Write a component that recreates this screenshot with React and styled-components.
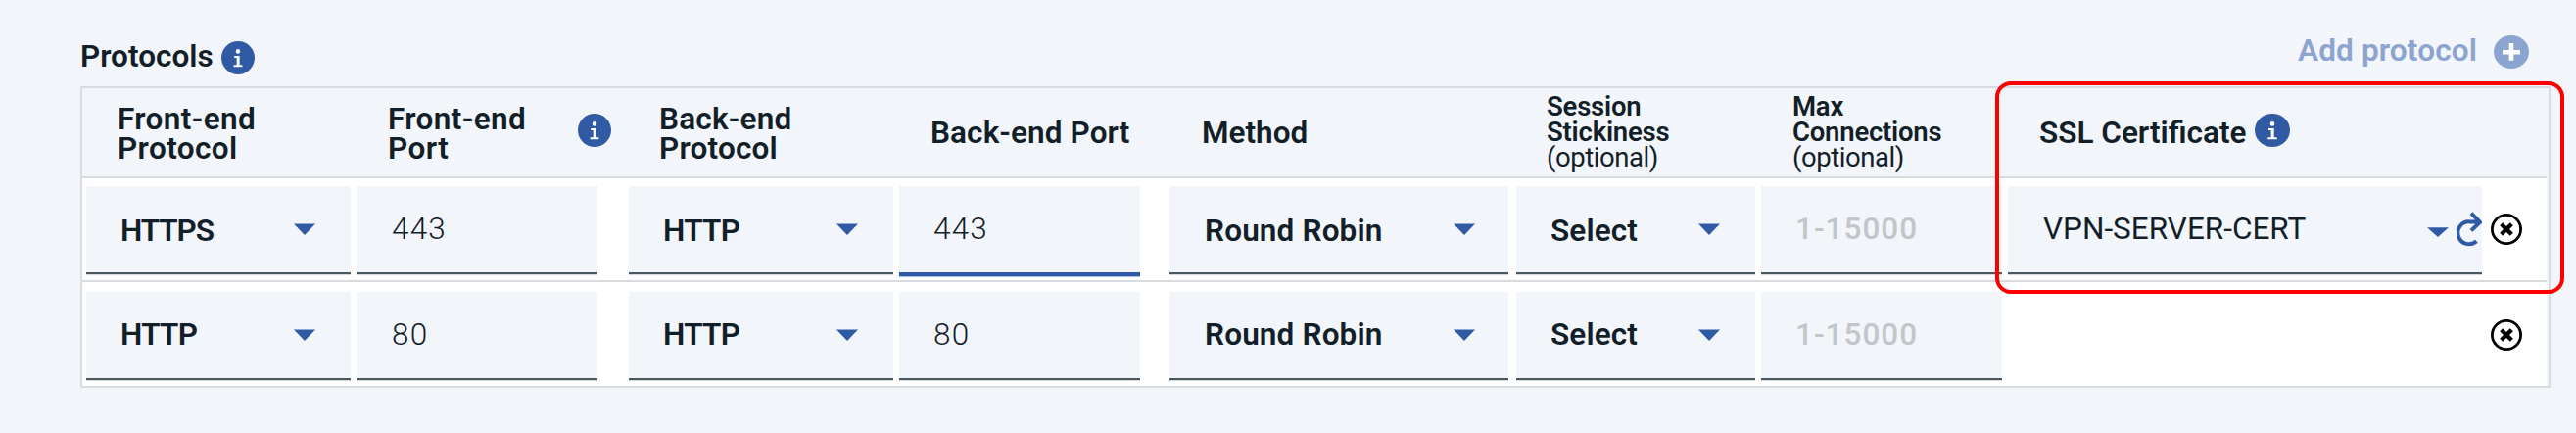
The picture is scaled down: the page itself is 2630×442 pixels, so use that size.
import React from "react";
import styled, { createGlobalStyle, css } from "styled-components";

const colors = {
  page: "#f2f5fa",
  ink: "#121e28",
  blue: "#305ba4",
  faded: "#8ba4d0",
  line: "#d8dbe0",
  underline: "#4a5861",
  hint: "#c2c6ca",
};

const GlobalStyle = createGlobalStyle`
  * { box-sizing: border-box; }
  body {
    margin: 0;
    background: ${colors.page};
    color: ${colors.ink};
    font-family: Roboto, "Liberation Sans", sans-serif;
  }
`;

const Page = styled.main`
  position: relative;
  width: 2630px;
  height: 442px;
  padding-left: 82px;
  overflow: hidden;
  background: ${colors.page};
`;

const Toolbar = styled.header`
  display: flex;
  justify-content: space-between;
  align-items: flex-start;
  width: 2500px;
  height: 88px;
`;

const Title = styled.h2`
  display: flex;
  margin: 0;
  padding-top: 42px;
  font-size: 31.5px;
  font-weight: 600;
  line-height: 31px;
`;

const TitleText = styled.span`
  width: 144px;
`;

const AddButton = styled.button`
  display: flex;
  margin: 0;
  padding: 36px 0 0;
  border: 0;
  background: none;
  color: ${colors.faded};
  font: 600 31.5px/31px Roboto, "Liberation Sans", sans-serif;
  letter-spacing: 0.15px;
`;

const AddText = styled.span`
  width: 200px;
  text-align: left;
`;

const Table = styled.section`
  width: 2522px;
  padding-right: 2px;
  border: 2px solid ${colors.line};
`;

const columns = css`
  display: grid;
  grid-template-columns: 276px 278px 276px 276px 354px 250px 252px 493px 1fr;
  padding-left: 4px;
`;

const HeaderRow = styled.div`
  ${columns}
  height: 92px;
  border-bottom: 2px solid ${colors.line};
`;

const HeaderCell = styled.div`
  display: flex;
  align-items: center;
  padding-left: ${(p) => p.$inset || 32}px;
`;

const HeaderText = styled.div`
  width: ${(p) => (p.$width ? `${p.$width}px` : "auto")};
  padding-top: ${(p) => (p.$lines === 2 ? 4 : 2)}px;
  font-size: 31.5px;
  font-weight: 600;
  line-height: 30px;
  letter-spacing: ${(p) => p.$spacing || 0}px;
  white-space: nowrap;
`;

const CompactText = styled.div`
  font-size: 27.5px;
  font-weight: 600;
  line-height: 26px;
  letter-spacing: -0.22px;
`;

const Optional = styled.span`
  font-weight: 400;
  letter-spacing: -0.45px;
`;

const BodyRow = styled.div`
  ${columns}
  height: 106px;
  padding-top: ${(p) => (p.$last ? 10 : 8)}px;
  border-bottom: ${(p) => (p.$last ? 0 : 2)}px solid ${colors.line};
  background: #fff;
`;

const Field = styled.div`
  display: flex;
  align-items: center;
  justify-content: space-between;
  width: ${(p) => p.$width}px;
  height: 90px;
  padding: 0 ${(p) => p.$right || 0}px 0 ${(p) => p.$left}px;
  border-bottom: 2px solid ${colors.underline};
  box-shadow: 0 1px 0 #d5d9dc;
  background: ${colors.page};
  ${(p) =>
    p.$focused &&
    css`
      border-bottom-color: ${colors.blue};
      box-shadow: 0 2px 0 ${colors.blue}, 0 3px 0 #a9bcdb;
    `}
`;

const SelectValue = styled.span`
  padding-top: ${(p) => (p.$first ? 4 : 0)}px;
  font-size: 31.5px;
  font-weight: 600;
  line-height: 32px;
  letter-spacing: ${(p) => p.$spacing}px;
`;

const InputValue = styled.span`
  font-size: 31.5px;
  font-weight: 350;
  line-height: 32px;
  letter-spacing: 1.2px;
`;

const Placeholder = styled(InputValue)`
  margin-left: -1px;
  color: ${colors.hint};
  font-weight: 500;
  letter-spacing: 1px;
`;

const CertificateValue = styled(InputValue)`
  font-weight: 400;
  letter-spacing: 0;
`;

const CertificateActions = styled.span`
  display: flex;
  gap: 8px;
  align-items: center;
`;

const RemoveCell = styled.div`
  grid-column: 9;
  padding-top: 28px;
`;

const Highlight = styled.div`
  position: absolute;
  left: 2037px;
  top: 83px;
  width: 581px;
  height: 217px;
  border: 4px solid #ff0000;
  border-radius: 16px;
`;

const Icon = styled.svg`
  display: block;
  flex: none;
  margin-top: ${(p) => p.$shift || 0}px;
`;

const InfoIcon = ({ width = 34, shift }) => (
  <Icon $shift={shift} width={width} height="34" viewBox="0 0 36 34" preserveAspectRatio="none">
    <ellipse cx="18" cy="17" rx="18" ry="17" fill={colors.blue} />
    <circle cx="18" cy="10.4" r="2.3" fill="#fff" />
    <path d="M14 15h5.7v9.2h3v2.1h-9.4v-2.1h3.3v-7.1H14z" fill="#fff" />
  </Icon>
);

const PlusIcon = () => (
  <Icon width="36" height="34" viewBox="0 0 36 34">
    <ellipse cx="18" cy="17" rx="18" ry="17" fill={colors.faded} />
    <path d="M15.6 8h4.7v7H27v4.4h-6.7v6.4h-4.7v-6.4H9V15h6.6z" fill="#fff" />
  </Icon>
);

const Caret = ({ height = 12, shift = 0 }) => (
  <Icon $shift={shift} width="22" height={height} viewBox="0 0 22 12" preserveAspectRatio="none">
    <path d="M0 0.4h22L11 12z" fill={colors.blue} />
  </Icon>
);

const RefreshIcon = () => (
  <Icon $shift={-1} width="26" height="36" viewBox="0 0 26 36">
    <path
      d="M23 10.4H13.5A11.4 11.4 0 1 0 20.4 30.2M15 1.6L24 10.8L15 19.4"
      fill="none"
      stroke={colors.blue}
      strokeWidth="4"
    />
  </Icon>
);

const RemoveIcon = () => (
  <Icon width="32" height="32" viewBox="0 0 32 32">
    <circle cx="16" cy="16" r="14.6" fill="none" stroke="#000" strokeWidth="2.8" />
    <path d="M10.7 10.7L21.3 21.3M21.3 10.7L10.7 21.3" stroke="#000" strokeWidth="4.3" />
  </Icon>
);

const Select = ({ width, value, first, left = 35, right = 36, spacing = 0.1 }) => (
  <div>
    <Field $width={width} $left={left} $right={right}>
      <SelectValue $first={first} $spacing={spacing}>{value}</SelectValue>
      <Caret />
    </Field>
  </div>
);

const Input = ({ width, value, left = 36, focused }) => (
  <div>
    <Field $width={width} $left={left} $focused={focused}>
      <InputValue>{value}</InputValue>
    </Field>
  </div>
);

const rows = [
  { frontend: "HTTPS", frontPort: "443", backend: "HTTP", backPort: "443", certificate: "VPN-SERVER-CERT" },
  { frontend: "HTTP", frontPort: "80", backend: "HTTP", backPort: "80" },
];

const ProtocolRow = ({ row, first }) => (
  <BodyRow $last={!first}>
    <Select width={270} value={row.frontend} first={first} spacing={first ? -1.1 : -0.7} />
    <Input width={246} value={row.frontPort} />
    <Select width={270} value={row.backend} first={first} spacing={-0.7} />
    <Input width={246} value={row.backPort} left={35} focused={first} />
    <Select width={346} value="Round Robin" first={first} left={36} right={34} spacing={0.15} />
    <Select width={244} value="Select" first={first} />
    <div>
      <Field $width={246} $left={36}>
        <Placeholder>1-15000</Placeholder>
      </Field>
    </div>
    {row.certificate && (
      <div>
        <Field $width={484} $left={36}>
          <CertificateValue>{row.certificate}</CertificateValue>
          <CertificateActions>
            <Caret height={10} shift={6} />
            <RefreshIcon />
          </CertificateActions>
        </Field>
      </div>
    )}
    <RemoveCell>
      <RemoveIcon />
    </RemoveCell>
  </BodyRow>
);

export default function App() {
  return (
    <>
      <GlobalStyle />
      <Page>
        <Toolbar>
          <Title>
            <TitleText>Protocols</TitleText>
            <InfoIcon />
          </Title>
          <AddButton>
            <AddText>Add protocol</AddText>
            <PlusIcon />
          </AddButton>
        </Toolbar>
        <Table>
          <HeaderRow>
            <HeaderCell>
              <HeaderText $lines={2} $spacing={0.4}>Front-end<br />Protocol</HeaderText>
            </HeaderCell>
            <HeaderCell>
              <HeaderText $lines={2} $width={194} $spacing={0.4}>Front-end<br />Port</HeaderText>
              <InfoIcon shift={-4} />
            </HeaderCell>
            <HeaderCell $inset={31}>
              <HeaderText $lines={2} $spacing={0.2}>Back-end<br />Protocol</HeaderText>
            </HeaderCell>
            <HeaderCell>
              <HeaderText $spacing={0.1}>Back-end Port</HeaderText>
            </HeaderCell>
            <HeaderCell $inset={33}>
              <HeaderText>Method</HeaderText>
            </HeaderCell>
            <HeaderCell $inset={31}>
              <CompactText>
                Session<br />Stickiness<br /><Optional>(optional)</Optional>
              </CompactText>
            </HeaderCell>
            <HeaderCell>
              <CompactText>
                Max<br />Connections<br /><Optional>(optional)</Optional>
              </CompactText>
            </HeaderCell>
            <HeaderCell>
              <HeaderText $width={220}>SSL Certificate</HeaderText>
              <InfoIcon width={36} shift={-4} />
            </HeaderCell>
          </HeaderRow>
          {rows.map((row, index) => (
            <ProtocolRow key={index} row={row} first={index === 0} />
          ))}
        </Table>
        <Highlight />
      </Page>
    </>
  );
}
